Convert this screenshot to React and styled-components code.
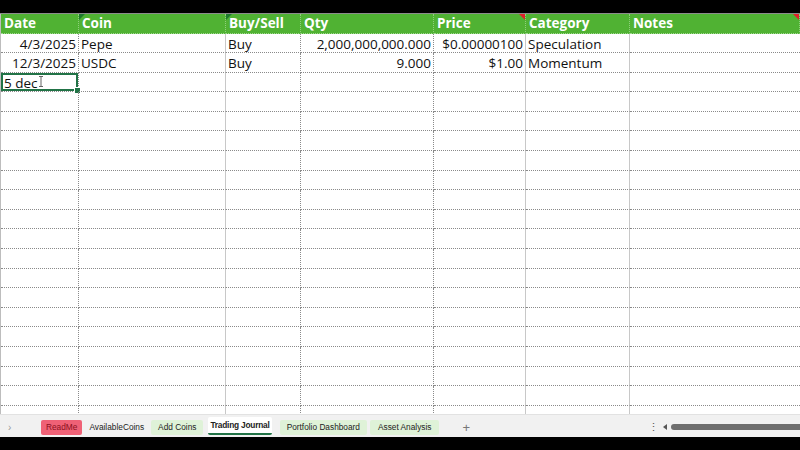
import React from "react";
import styled, { createGlobalStyle } from "styled-components";

const Global = createGlobalStyle`
  html, body { margin: 0; padding: 0; background: #000; }
  * { box-sizing: border-box; }
`;

const Page = styled.div`
  width: 800px;
  height: 450px;
  display: flex;
  flex-direction: column;
  background: #000;
  font-family: "Open Sans", "Liberation Sans", sans-serif;
  overflow: hidden;
`;

const TopBlack = styled.div`
  height: 14px;
  background: #000;
  border-bottom: 1px solid #8c8c8c;
  flex: none;
`;

const Sheet = styled.div`
  flex: 1;
  background: #fff;
  display: grid;
  grid-template-columns: 78px 147px 75px 133px 92px 104px 1fr;
  grid-template-rows: 19.5px;
  grid-auto-rows: 19.6px;
  border-left: 1px solid #bdbdbd;
  overflow: hidden;
`;

const sepStyle = {
  dotted: "1px dotted #8a8a8a",
  solid: "1px solid #c8c8c8",
  none: "none",
};

const Cell = styled.div`
  position: relative;
  border-right: ${(p) => sepStyle[p.$sep || "dotted"]};
  border-bottom: 1px dotted #8a8a8a;
  font-size: 13.5px;
  color: #111;
  line-height: 20px;
  padding: 0 2px 0 2px;
  text-align: ${(p) => p.$align || "left"};
  white-space: nowrap;
  overflow: visible;
`;

const HeadCell = styled(Cell)`
  background: #50b233;
  color: #fff;
  font-weight: 700;
  font-size: 13.5px;
  line-height: 19px;
  border-bottom: 1px dotted #9fd98f;
  border-right: 1px dotted #8fcf7c;
  padding-left: 3px;
`;

const Corner = styled.span`
  position: absolute;
  top: 0;
  ${(p) => (p.$side === "left" ? "left: 0;" : "right: 0;")}
  width: 0;
  height: 0;
  border-top: 6px solid ${(p) => p.$color};
  ${(p) =>
    p.$side === "left"
      ? "border-right: 6px solid transparent;"
      : "border-left: 6px solid transparent;"}
`;

const SelectedCell = styled(Cell)`
  box-shadow: inset 0 0 0 2px #217346;
  padding-left: 3px;
  &::after {
    content: "";
    position: absolute;
    right: -3px;
    bottom: -3px;
    width: 5px;
    height: 5px;
    background: #217346;
    border: 1px solid #fff;
  }
`;

const Cursor = styled.svg`
  position: absolute;
  left: 37px;
  top: 3px;
`;

const TabBar = styled.div`
  height: 23px;
  flex: none;
  background: #f1f1f1;
  border-top: 1px solid #e2e2e2;
  padding-top: 2px;
  display: flex;
  align-items: center;
  gap: 3px;
  font-family: "Liberation Sans", Arial, sans-serif;
  font-size: 8.3px;
  color: #222;
`;

const Arrow = styled.span`
  width: 38px;
  padding-left: 8px;
  color: #999;
  font-size: 10px;
`;

const tabBg = {
  red: "#ef6176",
  green: "#dff2d8",
  plain: "transparent",
  active: "#fff",
};

const Tab = styled.div`
  height: 15px;
  padding: 0 ${(p) => p.$pad || 7}px;
  display: flex;
  align-items: center;
  background: ${(p) => tabBg[p.$variant]};
  color: ${(p) => (p.$variant === "red" ? "#8b1020" : "#222")};
  border-radius: 2px;
  ${(p) =>
    p.$variant === "active" &&
    `font-weight: 700; letter-spacing: -0.2px; height: 18px; padding: 0 2px; border-bottom: 2px solid #217346; margin: -2px 5px 0 2px;`}
`;

const Plus = styled.span`
  margin-left: 20px;
  color: #777;
  font-size: 13px;
`;

const Dots = styled.span`
  margin-left: auto;
  color: #555;
  font-size: 11px;
  width: 12px;
`;

const LeftTri = styled.span`
  width: 0;
  height: 0;
  border-top: 3px solid transparent;
  border-bottom: 3px solid transparent;
  border-right: 4px solid #555;
  margin: 0 1px 0 0;
`;

const Thumb = styled.div`
  width: 129px;
  height: 6px;
  background: #6e6e6e;
  border-radius: 3px 0 0 3px;
`;

const BottomBlack = styled.div`
  height: 13px;
  flex: none;
  background: #000;
`;

const columns = [
  { name: "Date", sep: "dotted" },
  { name: "Coin", sep: "solid", tri: { side: "left", color: "#1e7a2e" } },
  { name: "Buy/Sell", sep: "dotted", tri: { side: "left", color: "#1e7a2e" } },
  { name: "Qty", sep: "dotted" },
  { name: "Price", sep: "solid", tri: { side: "right", color: "#e0202a" } },
  { name: "Category", sep: "solid" },
  { name: "Notes", sep: "none", tri: { side: "right", color: "#e0202a" } },
];

const dataSeps = ["dotted", "solid", "dotted", "dotted", "solid", "solid", "none"];

const rows = [
  ["4/3/2025", "Pepe", "Buy", "2,000,000,000.000", "$0.00000100", "Speculation", ""],
  ["12/3/2025", "USDC", "Buy", "9.000", "$1.00", "Momentum", ""],
];

const aligns = ["right", "left", "left", "right", "right", "left", "left"];

export default function App() {
  const emptyRows = Array.from({ length: 17 });
  return (
    <>
      <Global />
      <Page>
        <TopBlack />
        <Sheet>
          {columns.map((c) => (
            <HeadCell key={c.name} $sep={c.sep}>
              {c.name}
              {c.tri && <Corner $side={c.tri.side} $color={c.tri.color} />}
            </HeadCell>
          ))}
          {rows.map((r, i) =>
            r.map((v, j) => (
              <Cell key={`${i}-${j}`} $align={aligns[j]} $sep={dataSeps[j]}>
                {v}
              </Cell>
            ))
          )}
          <SelectedCell $sep="dotted">
            5 dec
            <Cursor width="6" height="11" viewBox="0 0 6 11">
              <path d="M1 0.5h4M3 0.5v10M1 10.5h4" stroke="#666" strokeWidth="1" fill="none" />
            </Cursor>
          </SelectedCell>
          {dataSeps.slice(1).map((s, j) => (
            <Cell key={`sel-${j}`} $sep={s} />
          ))}
          {emptyRows.map((_, i) =>
            dataSeps.map((s, j) => <Cell key={`e-${i}-${j}`} $sep={s} />)
          )}
        </Sheet>
        <TabBar>
          <Arrow>›</Arrow>
          <Tab $variant="red" $pad={5}>ReadMe</Tab>
          <Tab $variant="plain" $pad={4}>AvailableCoins</Tab>
          <Tab $variant="green">Add Coins</Tab>
          <Tab $variant="active">Trading Journal</Tab>
          <Tab $variant="green">Portfolio Dashboard</Tab>
          <Tab $variant="green" $pad={8}>Asset Analysis</Tab>
          <Plus>+</Plus>
          <Dots>⋮</Dots>
          <LeftTri />
          <Thumb />
        </TabBar>
        <BottomBlack />
      </Page>
    </>
  );
}
